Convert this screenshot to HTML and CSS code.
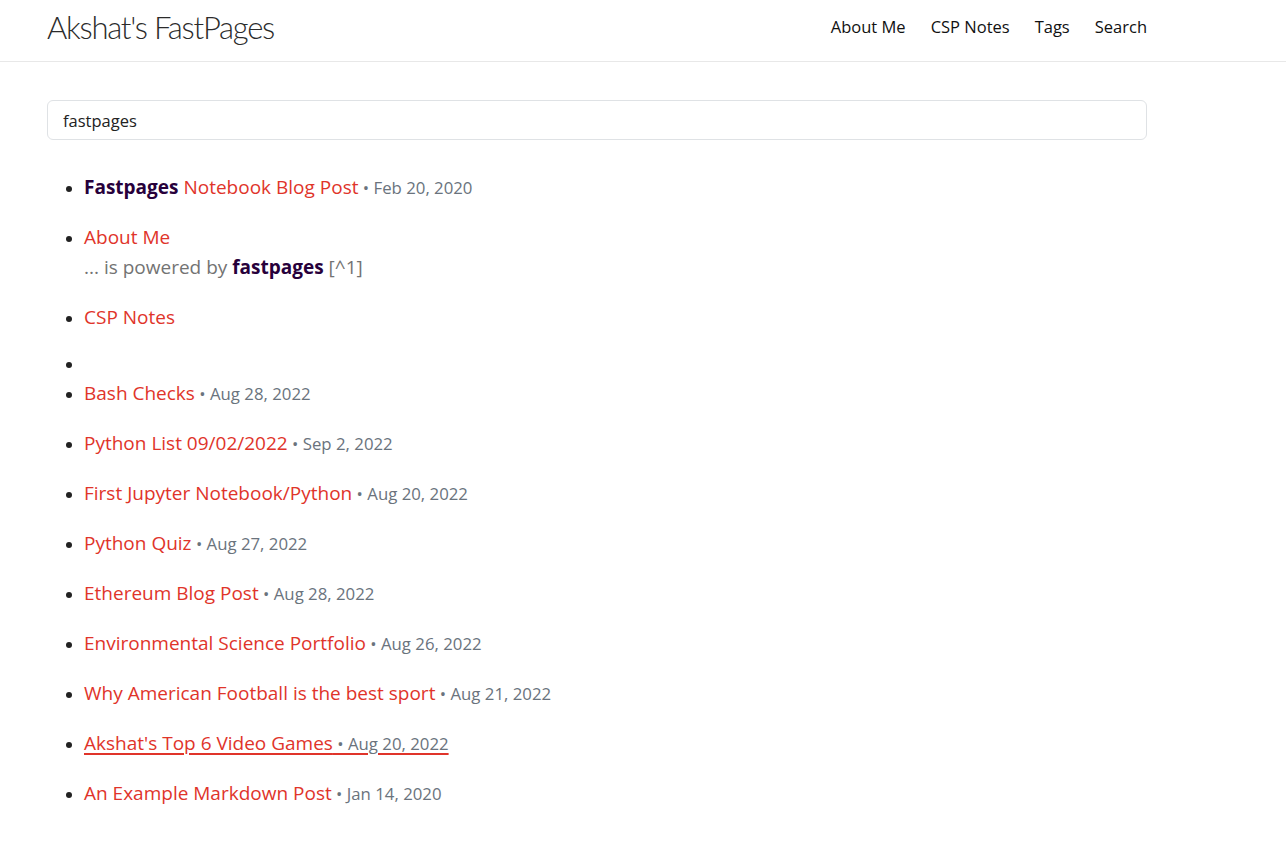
FILE: index.html
```html
<!DOCTYPE html>
<html lang="en">
<head>
<meta charset="utf-8">
<title>Search | Akshat's FastPages</title>
<link rel="stylesheet" href="styles.css">
</head>
<body>
<header class="site-header">
  <div class="wrapper header-inner">
    <a class="site-title" href="#">Akshat's FastPages</a>
    <nav class="site-nav">
      <a class="page-link" href="#">About Me</a>
      <a class="page-link" href="#">CSP Notes</a>
      <a class="page-link" href="#">Tags</a>
      <a class="page-link" href="#">Search</a>
    </nav>
  </div>
</header>
<main class="wrapper page-content">
  <input class="search-input" type="text" value="fastpages">
  <ul class="results">
    <li class="result"><a href="#"><strong class="hl">Fastpages</strong> Notebook Blog Post</a><span class="date"> • Feb 20, 2020</span></li>
    <li class="result"><a href="#">About Me</a><div class="excerpt">... is powered by <strong class="hl">fastpages</strong> [^1]</div></li>
    <li class="result"><a href="#">CSP Notes</a></li>
    <li class="result empty"></li>
    <li class="result"><a href="#">Bash Checks</a><span class="date"> • Aug 28, 2022</span></li>
    <li class="result"><a href="#">Python List 09/02/2022</a><span class="date"> • Sep 2, 2022</span></li>
    <li class="result"><a href="#">First Jupyter Notebook/Python</a><span class="date"> • Aug 20, 2022</span></li>
    <li class="result"><a href="#">Python Quiz</a><span class="date"> • Aug 27, 2022</span></li>
    <li class="result"><a href="#">Ethereum Blog Post</a><span class="date"> • Aug 28, 2022</span></li>
    <li class="result"><a href="#">Environmental Science Portfolio</a><span class="date"> • Aug 26, 2022</span></li>
    <li class="result"><a href="#">Why American Football is the best sport</a><span class="date"> • Aug 21, 2022</span></li>
    <li class="result hovered"><a href="#">Akshat's Top 6 Video Games<span class="date"> • Aug 20, 2022</span></a></li>
    <li class="result"><a href="#">An Example Markdown Post</a><span class="date"> • Jan 14, 2020</span></li>
  </ul>
</main>
</body>
</html>
```

FILE: styles.css
```css
* { box-sizing: border-box; }
html, body { margin: 0; padding: 0; background: #fff; }
body {
  font-family: "Open Sans", "Noto Sans", sans-serif;
  color: #111;
  font-size: 19px;
}
a { text-decoration: none; }
.wrapper {
  width: 1100px;
  margin-left: 47px;
}
.site-header {
  border-bottom: 1px solid #e8e8e8;
  height: 62px;
}
.header-inner {
  display: flex;
  justify-content: space-between;
  align-items: center;
  height: 61px;
}
.site-title {
  font-family: "Lato", sans-serif;
  font-weight: 300;
  font-size: 31px;
  color: #2b2b2b;
  letter-spacing: -1.25px;
  position: relative;
  top: -4px;
}
.site-nav {
  display: flex;
  gap: 25px;
  position: relative;
  top: -4px;
}
.page-link {
  color: #111;
  font-size: 16.5px;
}
.page-content {
  padding-top: 38px;
}
.search-input {
  display: block;
  width: 100%;
  height: 40px;
  border: 1px solid #dfe2e5;
  border-radius: 6px;
  padding: 0 15px;
  font-family: inherit;
  font-size: 16.5px;
  color: #222;
  outline: none;
}
.results {
  margin: 32px 0 0 0;
  padding-left: 37px;
  list-style: disc;
}
.result {
  line-height: 30px;
  margin-bottom: 20px;
  color: #222;
}
.result::marker { font-size: 16px; }
.result.empty { margin-bottom: 0; margin-top: -4px; height: 30px; }
.result a { color: #e0342a; }
.result .hl { color: #27003b; font-weight: 700; }
.date { color: #6a737d; font-size: 16.8px; line-height: 1; }
.excerpt { color: #737373; }
.hovered a {
  text-decoration: underline;
  text-decoration-color: #e0342a;
  text-decoration-thickness: 2px;
  text-underline-offset: 3px;
}
```
